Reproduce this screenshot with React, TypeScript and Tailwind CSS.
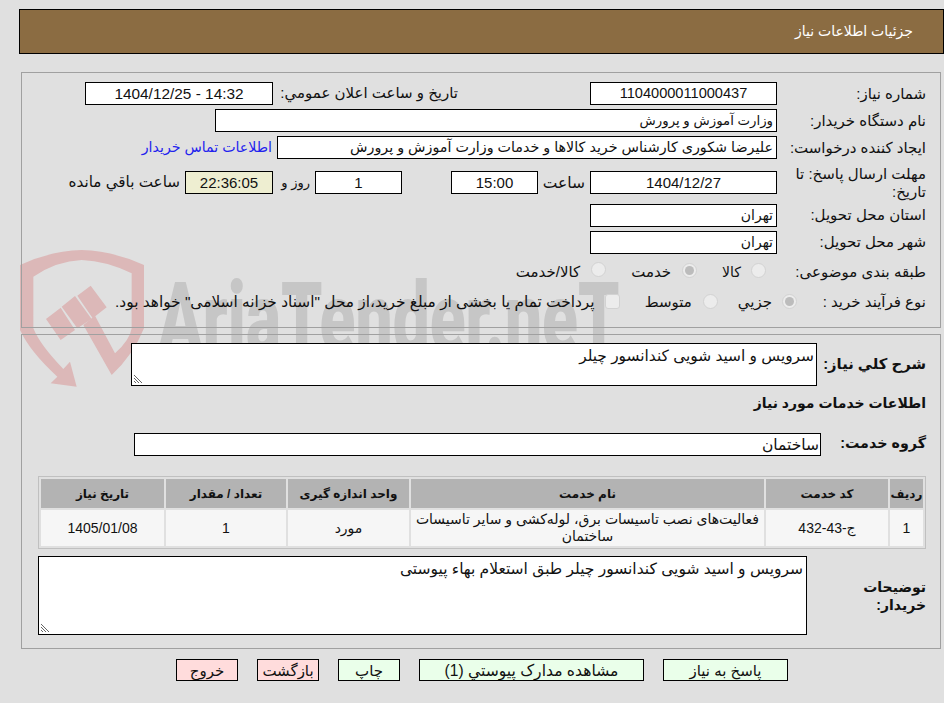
const font = { fontFamily: '"Liberation Sans", "DejaVu Sans", sans-serif' }

function Field({ className, children }: { className: string; children?: React.ReactNode }) {
    return <div className={`h-[23px] shrink-0 border border-black px-[3px] leading-[21px] whitespace-nowrap overflow-hidden ${className}`}>{children}</div>
}

function Label({ children }: { children: React.ReactNode }) {
    return <div className="w-[149px] shrink-0 pl-[12px] text-right leading-[18px]">{children}</div>
}

function Radio({ on, className }: { on?: boolean; className?: string }) {
    return (
        <span className={`flex h-[15px] w-[15px] shrink-0 items-center justify-center rounded-full border-[1.5px] border-[#d2d2d2] bg-[#ececec] ${className}`}>
            {on && <span className="h-[9px] w-[9px] rounded-full bg-[#bcbcbc]" />}
        </span>
    )
}

function Btn({ className, children }: { className: string; children: React.ReactNode }) {
    return <div className={`h-[22px] shrink-0 border border-black text-center leading-[21px] ${className}`}>{children}</div>
}

function Grip() {
    return (
        <svg className="absolute bottom-[1px] left-[1px]" width="10" height="10" viewBox="0 0 10 10">
            <path d="M1 1 L9 9 M1 4 L6 9 M1 7 L3 9" stroke="#666" strokeWidth="1" />
        </svg>
    )
}

export default function App() {
    const th = 'bg-[#b3b3b3] font-bold text-[12px] text-center h-[29px] p-0'
    const td = 'bg-[#f6f6f6] text-center h-[36px] p-0 text-[14px] leading-[17px]'
    return (
        <div dir="rtl" style={font} className="relative h-[703px] w-[944px] overflow-hidden bg-[#e0e0e0] pt-[9px] text-[15px] text-[#111]">
            {/* watermark */}
            <svg className="absolute left-[20px] top-[245px]" width="124" height="145" viewBox="0 0 372 435">
                <path d="M185 15 Q280 18 372 60 L372 250 Q340 330 275 390 L190 240 L225 212 L285 325 Q330 285 335 250 L335 85 Q260 48 185 45 Q110 48 40 95 L40 250 Q60 300 130 372 L150 350 L170 425 L92 415 L112 395 Q30 320 0 255 L0 60 Q90 18 185 15 Z" fill="#dcb8b8" />
                <path d="M78 222 L122 188 L165 255 L122 285 Z M125 185 L165 153 L215 222 L172 250 Z M172 152 L212 122 L260 187 L218 220 Z" fill="#dcb8b8" />
            </svg>
            <div dir="ltr" className="absolute left-[158px] top-[264px] origin-left scale-x-[0.672] whitespace-nowrap text-[98px] leading-[110px] font-black text-[#c6c6c6]" style={{ fontFamily: 'Roboto, sans-serif' }}>AriaTender.neT</div>

            <div className="relative">
                <div className="ml-[19px] flex h-[45px] w-[925px] items-center border border-black bg-[#8b6c42] pr-[30px] text-[14px] text-white">جزئیات اطلاعات نیاز</div>

                <div className="mr-[3px] mt-[18px] h-[256px] w-[920px] border border-[#a0a0a0] pr-[14px] pt-[9px]">
                    <div className="flex h-[23px] items-center">
                        <Label>شماره نیاز:</Label>
                        <Field className="w-[187px] bg-white text-center text-[14.6px]">1104000011000437</Field>
                        <div className="mr-[132px] w-[181px] shrink-0 whitespace-nowrap">تاریخ و ساعت اعلان عمومي:</div>
                        <Field className="mr-[4px] w-[188px] bg-white text-center text-[15.4px]"><span dir="ltr">1404/12/25 - 14:32</span></Field>
                    </div>
                    <div className="mt-[4px] flex h-[23px] items-center">
                        <Label>نام دستگاه خریدار:</Label>
                        <Field className="w-[562px] bg-white text-[13.3px]">وزارت آموزش و پرورش</Field>
                    </div>
                    <div className="mt-[4px] flex h-[23px] items-center">
                        <Label>ایجاد کننده درخواست:</Label>
                        <Field className="w-[500px] bg-white text-[14.3px]">علیرضا شکوری کارشناس خرید کالاها و خدمات وزارت آموزش و پرورش</Field>
                        <div className="mr-[5px] whitespace-nowrap text-[14.2px] text-[#2222ee]">اطلاعات تماس خریدار</div>
                    </div>
                    <div className="mt-[6px] flex h-[35px] items-center">
                        <Label>مهلت ارسال پاسخ: تا تاریخ:</Label>
                        <Field className="w-[187px] bg-white text-center">1404/12/27</Field>
                        <div className="mr-[5px] w-[47px] shrink-0 text-[15.5px]">ساعت</div>
                        <Field className="w-[87px] bg-white text-center">15:00</Field>
                        <div className="w-[49px] shrink-0" />
                        <Field className="w-[87px] bg-white text-center">1</Field>
                        <div className="mr-[5px] w-[37px] shrink-0 text-[13px]">روز و</div>
                        <Field className="w-[88px] bg-[#eeeed1] text-center">22:36:05</Field>
                        <div className="mr-[5px] whitespace-nowrap text-[15.2px]">ساعت باقي مانده</div>
                    </div>
                    <div className="mt-[4px] flex h-[22px] items-center">
                        <Label>استان محل تحویل:</Label>
                        <Field className="h-[22px] w-[187px] bg-white text-[14px]">تهران</Field>
                    </div>
                    <div className="mt-[5px] flex h-[22px] items-center">
                        <Label>شهر محل تحویل:</Label>
                        <Field className="h-[22px] w-[187px] bg-white text-[14px]">تهران</Field>
                    </div>
                    <div className="mt-[9px] flex h-[20px] items-center">
                        <Label>طبقه بندی موضوعی:</Label>
                        <Radio className="mr-[11px] -mt-[4px]" />
                        <span className="mr-[10px] text-[14px]">کالا</span>
                        <Radio on className="mr-[25px] -mt-[4px]" />
                        <span className="mr-[11px]">خدمت</span>
                        <Radio className="mr-[25px] -mt-[5px]" />
                        <span className="mr-[11px]">کالا/خدمت</span>
                    </div>
                    <div className="mt-[10px] flex h-[20px] items-center">
                        <Label>نوع فرآیند خرید :</Label>
                        <Radio on className="-mr-[20px] -mt-[1px]" />
                        <span className="mr-[10px]">جزيي</span>
                        <Radio className="mr-[20px] -mt-[1px]" />
                        <span className="mr-[11px]">متوسط</span>
                        <span className="mr-[25px] -mt-[1px] h-[15px] w-[15px] shrink-0 rounded-[3px] border-[1.5px] border-[#d2d2d2] bg-[#ececec]" />
                        <span className="mr-[10px] whitespace-nowrap text-[15.4px]">پرداخت تمام یا بخشی از مبلغ خرید،از محل "اسناد خزانه اسلامی" خواهد بود.</span>
                    </div>
                </div>

                <div className="mr-[3px] mt-[6px] h-[315px] w-[920px] border border-[#a0a0a0] pr-[14px] pt-[8px]">
                    <div className="flex h-[43px] items-center">
                        <div className="w-[109px] shrink-0 whitespace-nowrap text-[14.8px] font-bold">شرح کلي نیاز:</div>
                        <div className="relative h-[43px] w-[686px] shrink-0 border border-black bg-white px-[2px] pt-[1px] text-[15.4px] leading-[21px]">
                            سرویس و اسید شویی کندانسور چیلر
                            <Grip />
                        </div>
                    </div>
                    <div className="mt-[6px] text-[14px] font-bold leading-[22px]">اطلاعات خدمات مورد نیاز</div>
                    <div className="mt-[19px] flex h-[22px] items-center">
                        <div className="w-[105px] shrink-0 text-[14.3px] font-bold">گروه خدمت:</div>
                        <Field className="h-[22px] w-[687px] bg-white pr-[1px] text-[15.5px]">ساختمان</Field>
                    </div>
                    <table className="mt-[21px] w-[888px] table-fixed border-separate border-spacing-[2px] border border-[#c0c0c0]">
                        <colgroup>
                            <col className="w-[33px]" /><col className="w-[122px]" /><col className="w-[353px]" /><col className="w-[121px]" /><col className="w-[120px]" /><col />
                        </colgroup>
                        <thead>
                            <tr>
                                <th className={th}>ردیف</th><th className={th}>کد خدمت</th><th className={th}>نام خدمت</th><th className={th}>واحد اندازه گیری</th><th className={th}>تعداد / مقدار</th><th className={th}>تاریخ نیاز</th>
                            </tr>
                        </thead>
                        <tbody>
                            <tr>
                                <td className={td}>1</td><td className={td}>ج-43-432</td><td className={td}>فعالیت‌های نصب تاسیسات برق، لوله‌کشی و سایر تاسیسات ساختمان</td><td className={td}>مورد</td><td className={td}>1</td><td className={td}>1405/01/08</td>
                            </tr>
                        </tbody>
                    </table>
                    <div className="mt-[7px] flex h-[79px] items-center">
                        <div className="w-[119px] shrink-0"><div className="w-[70px] text-[14px] font-bold leading-[18px]">توضیحات خریدار:</div></div>
                        <div className="relative h-[79px] w-[769px] shrink-0 border border-black bg-white px-[3px] pt-[1px] text-[15.5px] leading-[21px]">
                            سرویس و اسید شویی کندانسور چیلر طبق استعلام بهاء پیوستی
                            <Grip />
                        </div>
                    </div>
                </div>

                <div className="mr-[156px] mt-[10px] flex">
                    <Btn className="w-[125px] bg-[#eaffea]">پاسخ به نیاز</Btn>
                    <Btn className="mr-[19px] w-[225px] bg-[#eaffea] text-[15.6px]">مشاهده مدارک پیوستي (1)</Btn>
                    <Btn className="mr-[19px] w-[62px] bg-[#eaffea]">چاپ</Btn>
                    <Btn className="mr-[19px] w-[62px] bg-[#ffdcdc]">بازگشت</Btn>
                    <Btn className="mr-[19px] w-[62px] bg-[#ffdcdc]">خروج</Btn>
                </div>
            </div>
        </div>
    )
}
